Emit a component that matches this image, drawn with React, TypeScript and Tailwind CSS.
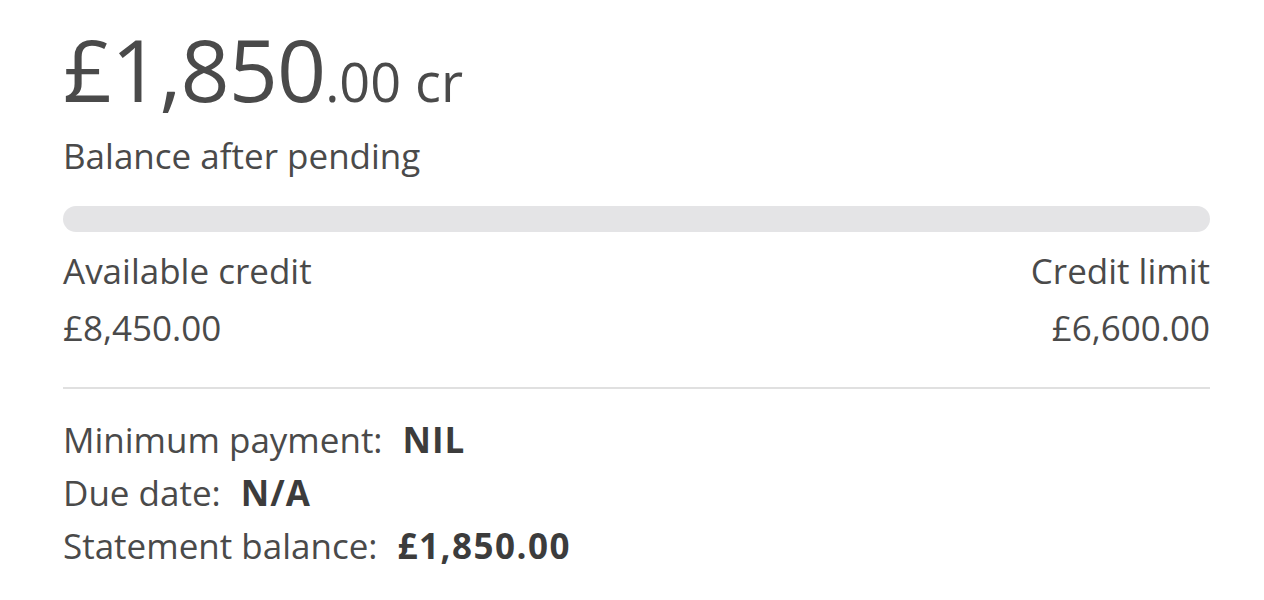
import React from "react";

const App: React.FC = () => {
  return (
    <div className="w-[1264px] h-[600px] bg-white pl-[63px] pr-[54px] text-[#4a4a4a] font-['Open_Sans',sans-serif] overflow-hidden">
      <div className="mt-[26px] leading-none flex items-baseline">
        <span className="text-[86px] tracking-[-1px]">£1,850</span>
        <span className="text-[54px]">.00 cr</span>
      </div>
      <p className="mt-[22px] text-[35px] leading-[44px]">Balance after pending</p>

      <div className="mt-[28px] h-[26px] rounded-full bg-[#e4e4e6]" />

      <div className="mt-[10px] flex justify-between text-[35px] leading-[57px]">
        <div>
          <p>Available credit</p>
          <p>£8,450.00</p>
        </div>
        <div className="text-right">
          <p>Credit limit</p>
          <p>£6,600.00</p>
        </div>
      </div>

      <div className="mt-[31px] h-[2px] bg-[#e0e0e0]" />

      <div className="mt-[24px] text-[35px] leading-[53px]">
        <p>
          Minimum payment:<span className="ml-[20px] font-bold tracking-[1px] text-[#3c3c3c]">NIL</span>
        </p>
        <p>
          Due date:<span className="ml-[20px] font-bold tracking-[1px] text-[#3c3c3c]">N/A</span>
        </p>
        <p>
          Statement balance:<span className="ml-[20px] font-bold tracking-[1.5px] text-[#3c3c3c]">£1,850.00</span>
        </p>
      </div>
    </div>
  );
};

export default App;
